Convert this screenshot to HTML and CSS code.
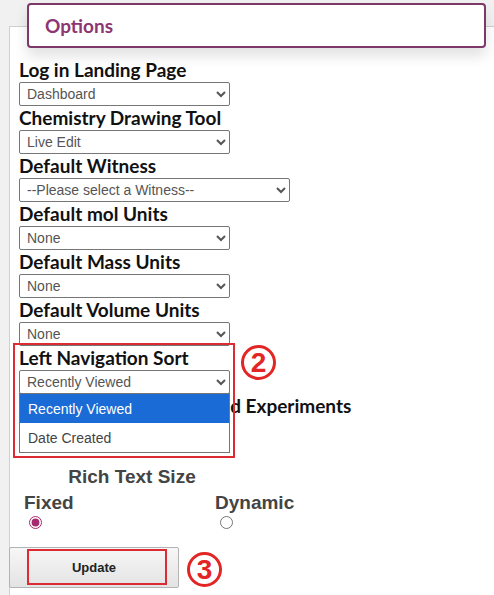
FILE: index.html
```html
<!DOCTYPE html>
<html lang="en">
<head>
    <meta charset="UTF-8">
    <title>Options</title>
    <link rel="stylesheet" href="styles.css">
</head>
<body>
    <header class="options-head">Options</header>

    <main class="panel">
        <div class="field">
            <label for="landing">Log in Landing Page</label>
            <select id="landing"><option>Dashboard</option></select>
        </div>
        <div class="field">
            <label for="drawTool">Chemistry Drawing Tool</label>
            <select id="drawTool"><option>Live Edit</option></select>
        </div>
        <div class="field">
            <label for="witness">Default Witness</label>
            <select id="witness" class="wide"><option>--Please select a Witness--</option></select>
        </div>
        <div class="field">
            <label for="molUnits">Default mol Units</label>
            <select id="molUnits"><option>None</option></select>
        </div>
        <div class="field">
            <label for="massUnits">Default Mass Units</label>
            <select id="massUnits"><option>None</option></select>
        </div>
        <div class="field">
            <label for="volUnits">Default Volume Units</label>
            <select id="volUnits"><option>None</option></select>
        </div>

        <!-- open dropdown, marked as step 2 -->
        <div class="field marked">
            <label for="navSort">Left Navigation Sort</label>
            <select id="navSort"><option>Recently Viewed</option></select>
            <ul class="dropdown">
                <li class="active">Recently Viewed</li>
                <li>Date Created</li>
            </ul>
            <span class="mark-box"></span>
            <span class="step step-2">2</span>
        </div>
        <div class="field">
            <label for="recent">Display Recently Accessed Experiments</label>
            <select id="recent"><option>10</option></select>
        </div>

        <div class="rich">
            <div class="rich-title">Rich Text Size</div>
            <div class="rich-cols">
                <label class="rich-opt">Fixed <input type="radio" name="rts" checked></label>
                <label class="rich-opt">Dynamic <input type="radio" name="rts"></label>
            </div>
        </div>

        <div class="actions">
            <button type="button" class="btn">Update<span class="btn-mark"></span></button>
            <span class="step step-3">3</span>
        </div>
    </main>
</body>
</html>
```

FILE: styles.css
```css
/* Global */
body {
    margin: 0;
    padding-top: 3px;
    background: #f1f1f1;
    font-family: "Liberation Sans", Arial, sans-serif;
    color: #111;
    overflow: hidden;
}

/* Options header card */
.options-head {
    position: relative;
    z-index: 2;
    margin: 0 8px 0 27px;
    height: 41px;
    padding-left: 16px;
    border: 2px solid #7b3868;
    border-radius: 4px;
    background: #fff;
    box-shadow: 0 8px 14px rgba(0, 0, 0, 0.12);
    font-family: Lato, sans-serif;
    font-weight: bold;
    font-size: 19px;
    line-height: 41px;
    color: #8c3672;
}

/* Main panel */
.panel {
    margin: -22px 0 0 9px;
    padding: 31px 0 20px 9px;
    border: 1px solid #cfcfcf;
    border-right: none;
    background: #fff;
}

.field {
    display: flex;
    flex-direction: column;
    align-items: flex-start;
}

.field label {
    font-family: Lato, sans-serif;
    font-weight: bold;
    font-size: 19px;
    line-height: 24px;
    color: #111;
    white-space: nowrap;
}

.field select {
    width: 211px;
    height: 24px;
    margin: 0;
    padding: 0 0 0 3px;
    border: 1px solid #767676;
    border-radius: 2px;
    background: #fff;
    font-family: "Liberation Sans", Arial, sans-serif;
    font-size: 14px;
    color: #555;
}

.field select.wide {
    width: 271px;
}

/* Opened dropdown with step marker */
.marked {
    position: relative;
}

.dropdown {
    position: absolute;
    z-index: 3;
    top: 47px;
    left: 0;
    width: 209px;
    margin: 0;
    padding: 0;
    list-style: none;
    border: 1px solid #767676;
    background: #fff;
}

.dropdown li {
    height: 29px;
    padding-left: 8px;
    font-size: 14px;
    line-height: 30px;
    color: #444;
}

.dropdown li.active {
    background: #1a6bd5;
    color: #fff;
}

.mark-box {
    position: absolute;
    z-index: 4;
    top: -3px;
    left: -6px;
    width: 218px;
    height: 111px;
    border: 2px solid #dc2b33;
}

.step {
    position: absolute;
    width: 29px;
    height: 29px;
    border: 3.5px solid #e32525;
    border-radius: 50%;
    color: #e32525;
    font-family: "Liberation Sans", Arial, sans-serif;
    font-weight: bold;
    font-size: 28px;
    line-height: 30px;
    text-align: center;
}

.step-2 {
    top: -1px;
    left: 222px;
}

.step-3 {
    top: 5px;
    left: 178px;
}

/* Rich text size */
.rich {
    margin-top: 23px;
    width: 226px;
    color: #444;
    font-weight: bold;
    font-size: 19px;
}

.rich-title {
    text-align: center;
    line-height: 24px;
}

.rich-cols {
    display: grid;
    grid-template-columns: 191px auto;
    padding-left: 5px;
    margin-top: 2px;
}

.rich-opt {
    display: flex;
    flex-direction: column;
    align-items: flex-start;
    line-height: 24px;
}

.rich-opt input {
    display: block;
    width: 13px;
    height: 13px;
    margin: 1px 0 0 5px;
    accent-color: #a52a6e;
}

/* Update button */
.actions {
    position: relative;
    margin: 18px 0 0 -10px;
}

.btn {
    position: relative;
    display: block;
    width: 170px;
    height: 41px;
    border: 1px solid #b3b3b3;
    border-radius: 2px;
    background: linear-gradient(#f7f7f7, #e3e3e3);
    font-family: "Liberation Sans", Arial, sans-serif;
    font-weight: bold;
    font-size: 13px;
    color: #222;
}

.btn-mark {
    position: absolute;
    top: 1px;
    left: 17px;
    width: 136px;
    height: 32px;
    border: 2px solid #dc2b33;
}
```
